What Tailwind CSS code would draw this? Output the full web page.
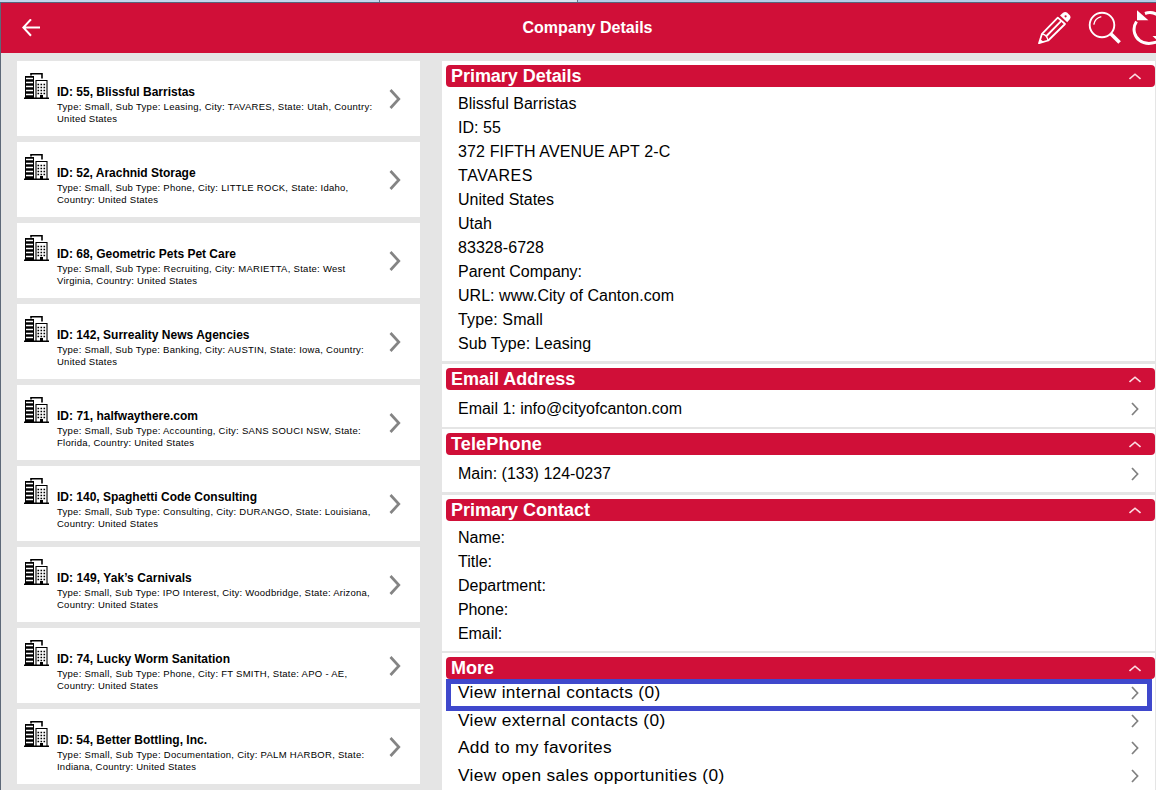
<!DOCTYPE html>
<html lang="en">
<head>
<meta charset="utf-8">
<title>Company Details</title>
<script src="https://cdn.jsdelivr.net/npm/@tailwindcss/browser@4"></script>
</head>
<body class="w-[1156px] h-[790px] overflow-hidden bg-[#e5e5e5] text-black font-['Liberation_Sans',Arial,sans-serif]">
<svg class="hidden">
  <symbol id="building" viewBox="0 0 25 26">
    <path d="M7 2.5V.8H18V5.5" fill="none" stroke="#000" stroke-width="1.6"/>
    <path d="M1 3H10V25H1Z"/>
    <path d="M2 5.5H9M2 9.5H9M2 13.5H9M2 17.5H9M2 21.5H9" stroke="#fff" stroke-width="1.3"/>
    <path d="M12 25V7.5H23V25" fill="none" stroke="#000" stroke-width="1.1"/>
    <path d="M13.5 11.5H22M13.5 14.5H22M13.5 17.5H22M13.5 20.5H22" stroke="#000" stroke-width="1.3" stroke-dasharray="1.6 1.4"/>
    <path d="M16 22H19V25H16ZM0 24.6H25V26H0Z"/>
  </symbol>
  <symbol id="right" viewBox="0 0 12 20"><path d="M1.5 1L9.8 10L1.5 19" fill="none" stroke="#848484" stroke-width="2.7"/></symbol>
  <symbol id="small-right" viewBox="0 0 8 14"><path d="M1 1L6.6 7L1 13" fill="none" stroke="#808080" stroke-width="1.7"/></symbol>
  <symbol id="up" viewBox="0 0 12 7"><path d="M.5 6L6 1.2L11.5 6" fill="none" stroke="#fbdce2" stroke-width="1.6"/></symbol>
</svg>
<div class="flex h-full flex-col">
  <div class="h-[2px] shrink-0 bg-[#b4cde8] flex"><div class="w-[379px] bg-[#c3d7ec]"></div><div class="w-[199px] border-x border-[#66758a] bg-[#d9e4f0]"></div></div>
  <div class="h-px shrink-0 bg-[#56657c]"></div>
  <div class="flex min-h-0 flex-1 flex-col border-l border-[#5d6878]">
    <header class="flex h-[50px] shrink-0 items-center justify-between overflow-hidden bg-[#d00f38]">
      <div class="flex w-[118px] pl-[21px]">
        <svg class="h-[18px] w-[18px]" viewBox="0 0 18 18"><path d="M18 8.5H1.5M9 .3L1.3 8.5L9 16.7" fill="none" stroke="#fff" stroke-width="2"/></svg>
      </div>
      <h1 class="text-[16px] font-bold text-white pl-[18px]"><span data-font="bold 16px" data-w="130">Company Details</span></h1>
      <div class="w-[118px] shrink-0 self-stretch">
        <svg class="h-[50px] w-[118px]" viewBox="1038 3 118 50" fill="none" stroke="#fff">
          <path d="M1039 43.2L1042 33.8L1057.8 17.6L1065 24L1048.2 40.5Z" stroke-width="1.8" stroke-linejoin="round"/>
          <path d="M1042 34Q1047 34.5 1048 40.5" stroke-width="1.3"/>
          <path d="M1046.5 36L1061.3 20.8" stroke-width="1.8"/>
          <path d="M1038.6 43.8L1040.2 39L1043.8 42Z" fill="#fff" stroke="none"/>
          <path d="M1060 15.6L1063 12.8Q1065 11.5 1067 12.6L1070 15.6Q1071.2 17.5 1070 19L1067.2 22.2Z" fill="#fff" stroke="none"/>
          <circle cx="1065.6" cy="16.3" r="1.1" fill="#d00f38" stroke="none"/>
          <circle cx="1102" cy="25" r="12.3" stroke-width="1.9"/>
          <path d="M1093.8 24.6Q1094.8 18.2 1101.3 16.6" stroke-width="1.4"/>
          <path d="M1110.5 33.5L1119.6 42.5" stroke-width="3.6"/>
          <path d="M1145 13.5Q1151 11.2 1157 14.5M1136.5 21.5C1131 30 1136 38 1139.5 40.3Q1146 45.5 1157 42" stroke-width="3"/>
          <path d="M1137 10.3V20.3H1148.4Z" fill="#fff" stroke="none"/>
          <path d="M1152.5 36H1158V41Z" fill="#fff" stroke="none"/>
        </svg>
      </div>
    </header>
    <main class="flex min-h-0 flex-1 gap-[22px] overflow-hidden pl-4 pt-2">
      <aside id="companies" class="flex w-[403px] shrink-0 flex-col gap-[6px]"></aside>
      <section id="details" class="flex w-[713px] shrink-0 flex-col"></section>
    </main>
  </div>
</div>
<script>
const companies = [
  ["ID: 55, Blissful Barristas",138,"Type: Small, Sub Type: Leasing, City: TAVARES, State: Utah, Country:",315,"United States",60],
  ["ID: 52, Arachnid Storage",139,"Type: Small, Sub Type: Phone, City: LITTLE ROCK, State: Idaho,",291,"Country: United States",101],
  ["ID: 68, Geometric Pets Pet Care",179,"Type: Small, Sub Type: Recruiting, City: MARIETTA, State: West",288,"Virginia, Country: United States",140],
  ["ID: 142, Surreality News Agencies",193,"Type: Small, Sub Type: Banking, City: AUSTIN, State: Iowa, Country:",307,"United States",60],
  ["ID: 71, halfwaythere.com",141,"Type: Small, Sub Type: Accounting, City: SANS SOUCI NSW, State:",304,"Florida, Country: United States",137],
  ["ID: 140, Spaghetti Code Consulting",200,"Type: Small, Sub Type: Consulting, City: DURANGO, State: Louisiana,",313,"Country: United States",101],
  ["ID: 149, Yak’s Carnivals",135,"Type: Small, Sub Type: IPO Interest, City: Woodbridge, State: Arizona,",313,"Country: United States",101],
  ["ID: 74, Lucky Worm Sanitation",173,"Type: Small, Sub Type: Phone, City: FT SMITH, State: APO - AE,",291,"Country: United States",101],
  ["ID: 54, Better Bottling, Inc.",150,"Type: Small, Sub Type: Documentation, City: PALM HARBOR, State:",307,"Indiana, Country: United States",139]
];
const line = (text, width, font) => `<div><span data-font="${font}" data-w="${width}">${text}</span></div>`;
document.getElementById("companies").innerHTML = companies.map(c => `
  <article class="flex h-[75px] shrink-0 bg-white pl-[7px] pr-[19px]">
    <svg class="mt-3 h-[26px] w-[25px] shrink-0"><use href="#building"/></svg>
    <div class="ml-2 flex-1 whitespace-nowrap pt-[23px]">
      <div class="text-[12px] leading-[16px] font-bold">${line(c[0], c[1], "bold 12px")}</div>
      <div class="text-[9.5px] leading-[12px] pt-px">${line(c[2], c[3] + 0.7, "9.5px")}${line(c[4], c[5] + 0.3, "9.5px")}</div>
    </div>
    <svg class="mt-7 h-5 w-3 shrink-0"><use href="#right"/></svg>
  </article>`).join("");

const sections = [
  {title:"Primary Details", w:130.5, box:"h-[300px] mb-[3px]", rows:[["Blissful Barristas",118.5],["ID: 55",43],["372 FIFTH AVENUE APT 2-C",214.5],["TAVARES",75],["United States",96],["Utah",34],["83328-6728",86],["Parent Company:",124],["URL: www.City of Canton.com",216],["Type: Small",85],["Sub Type: Leasing",133.5]]},
  {title:"Email Address", w:125, box:"h-[63px] mb-[2px]", links:true, pad:"pt-[7px]", rows:[["Email 1: info@cityofcanton.com",224]]},
  {title:"TelePhone", w:91, box:"h-[63px] mb-[3px]", links:true, pad:"pt-[7px]", rows:[["Main: (133) 124-0237",153]]},
  {title:"Primary Contact", w:139, box:"h-[156px] mb-[2px]", rows:[["Name:",47],["Title:",34],["Department:",88],["Phone:",50],["Email:",44]]},
  {title:"More", w:43, box:"h-[140px]", menu:true, rows:[["View internal contacts (0)",202.5],["View external contacts (0)",207.5],["Add to my favorites",154],["View open sales opportunities (0)",266.5]]}
];
const chevron = `<svg class="h-[14px] w-2 shrink-0"><use href="#small-right"/></svg>`;
document.getElementById("details").innerHTML = sections.map(s => `
  <section class="shrink-0 bg-white pt-1 pl-1 ${s.box}">
    <h2 class="flex h-[22px] items-center justify-between rounded-[4px] bg-[#d00f38] pl-[5px] pr-[14px] text-[18px] leading-[22px] font-bold text-white">
      <span data-font="bold 18px" data-w="${s.w}">${s.title}</span><svg class="h-[7px] w-3"><use href="#up"/></svg>
    </h2>
    ${s.menu ? `<div class="relative text-[17.3px]">
      <div class="absolute left-0 top-0 h-8 w-[706px] border-[5px] border-[#3f48cc]"></div>
      ${s.rows.map(r => `<div class="flex h-[27.7px] items-center justify-between pl-3 pr-4"><span data-font="17.3px" data-w="${r[1]}">${r[0]}</span>${chevron}</div>`).join("")}
    </div>` : `<div class="${s.pad || "pt-[5px]"} text-[16px]">
      ${s.rows.map(r => `<div class="flex h-6 items-center justify-between pl-3 pr-4"><span data-font="16px" data-w="${r[1]}">${r[0]}</span>${s.links ? chevron : ""}</div>`).join("")}
    </div>`}
  </section>`).join("");

// Even out tracking so each label fills its designed width.
const ctx = document.createElement("canvas").getContext("2d");
document.querySelectorAll("[data-w]").forEach(el => {
  ctx.font = el.dataset.font + " 'Liberation Sans'";
  const extra = Number(el.dataset.w) - ctx.measureText(el.textContent).width;
  el.style.whiteSpace = "nowrap";
  el.style.letterSpacing = extra / el.textContent.length + "px";
});
</script>
</body>
</html>
